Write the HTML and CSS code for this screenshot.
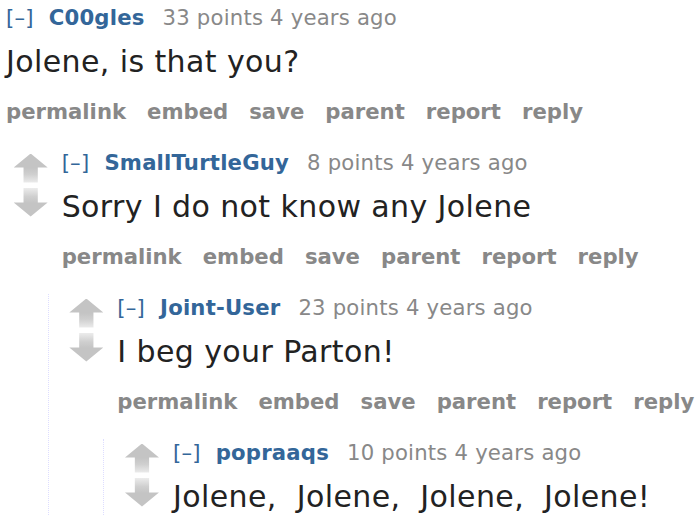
FILE: index.html
```html
<!DOCTYPE html>
<html>
<head>
<meta charset="utf-8">
<link rel="stylesheet" href="styles.css">
</head>
<body>
<div class="thread">
  <div class="comment">
    <div class="row">
      <div class="midcol"><div class="arrow up"></div><div class="arrow down"></div></div>
      <div class="entry">
        <p class="tagline"><span class="expand">[–]</span><span class="author">C00gles</span><span class="score">33 points 4 years ago</span></p>
        <p class="md">Jolene, is that you?</p>
        <ul class="buttons"><li>permalink</li><li>embed</li><li>save</li><li>parent</li><li>report</li><li>reply</li></ul>
      </div>
    </div>
    <div class="children">
      <div class="comment">
        <div class="row">
          <div class="midcol"><div class="arrow up"></div><div class="arrow down"></div></div>
          <div class="entry">
            <p class="tagline"><span class="expand">[–]</span><span class="author">SmallTurtleGuy</span><span class="score">8 points 4 years ago</span></p>
            <p class="md">Sorry I do not know any Jolene</p>
            <ul class="buttons"><li>permalink</li><li>embed</li><li>save</li><li>parent</li><li>report</li><li>reply</li></ul>
          </div>
        </div>
        <div class="children">
          <div class="comment">
            <div class="row">
              <div class="midcol"><div class="arrow up"></div><div class="arrow down"></div></div>
              <div class="entry">
                <p class="tagline"><span class="expand">[–]</span><span class="author">Joint-User</span><span class="score">23 points 4 years ago</span></p>
                <p class="md">I beg your Parton!</p>
                <ul class="buttons"><li>permalink</li><li>embed</li><li>save</li><li>parent</li><li>report</li><li>reply</li></ul>
              </div>
            </div>
            <div class="children">
              <div class="comment">
                <div class="row">
                  <div class="midcol"><div class="arrow up"></div><div class="arrow down"></div></div>
                  <div class="entry">
                    <p class="tagline"><span class="expand">[–]</span><span class="author">popraaqs</span><span class="score">10 points 4 years ago</span></p>
                    <p class="md">Jolene,&nbsp; Jolene,&nbsp; Jolene,&nbsp; Jolene!</p>
                  </div>
                </div>
              </div>
            </div>
          </div>
        </div>
      </div>
    </div>
  </div>
</div>
</body>
</html>
```

FILE: styles.css
```css
html, body {
  margin: 0;
  padding: 0;
  background: #fff;
  overflow: hidden;
}
body {
  font-family: "DejaVu Sans", Verdana, sans-serif;
  width: 700px;
  height: 520px;
}
.thread {
  margin-left: -42px;
  padding-top: 4px;
}
.row {
  display: flex;
  align-items: flex-start;
}
.midcol {
  flex: 0 0 48px;
  display: flex;
  flex-direction: column;
  gap: 5px;
  padding-top: 4.5px;
}
.arrow {
  width: 34px;
  height: 29px;
}
.arrow.up {
  background: linear-gradient(to bottom, #c4c4c4 0%, #c4c4c4 48%, #cfcfcf 70%, #ececec 100%);
  clip-path: polygon(50% 0, 100% 48%, 71% 48%, 71% 100%, 29% 100%, 29% 48%, 0 48%);
}
.arrow.down {
  background: linear-gradient(to top, #c4c4c4 0%, #c4c4c4 48%, #cfcfcf 70%, #ececec 100%);
  clip-path: polygon(29% 0, 71% 0, 71% 52%, 100% 52%, 50% 100%, 0 52%, 29% 52%);
}
.entry {
  flex: 1 1 auto;
  white-space: nowrap;
}
.tagline {
  margin: 0;
  font-size: 21.2px;
  line-height: 28px;
  letter-spacing: 0.2px;
  color: #888;
}
.expand {
  color: #369;
  margin-right: 15px;
}
.author {
  color: #369;
  font-weight: bold;
  margin-right: 18px;
}
.md {
  margin: 12px 0 0;
  font-size: 30px;
  line-height: 36px;
  letter-spacing: 0.4px;
  color: #222;
}
.buttons {
  list-style: none;
  margin: 18px 0 0;
  padding: 0;
  display: flex;
  gap: 21px;
  font-size: 21.2px;
  line-height: 28px;
  font-weight: bold;
  color: #888;
}
.children {
  margin: 23px 0 0 34px;
  padding-left: 20.67px;
  border-left: 1px dotted #ddf;
}
```
